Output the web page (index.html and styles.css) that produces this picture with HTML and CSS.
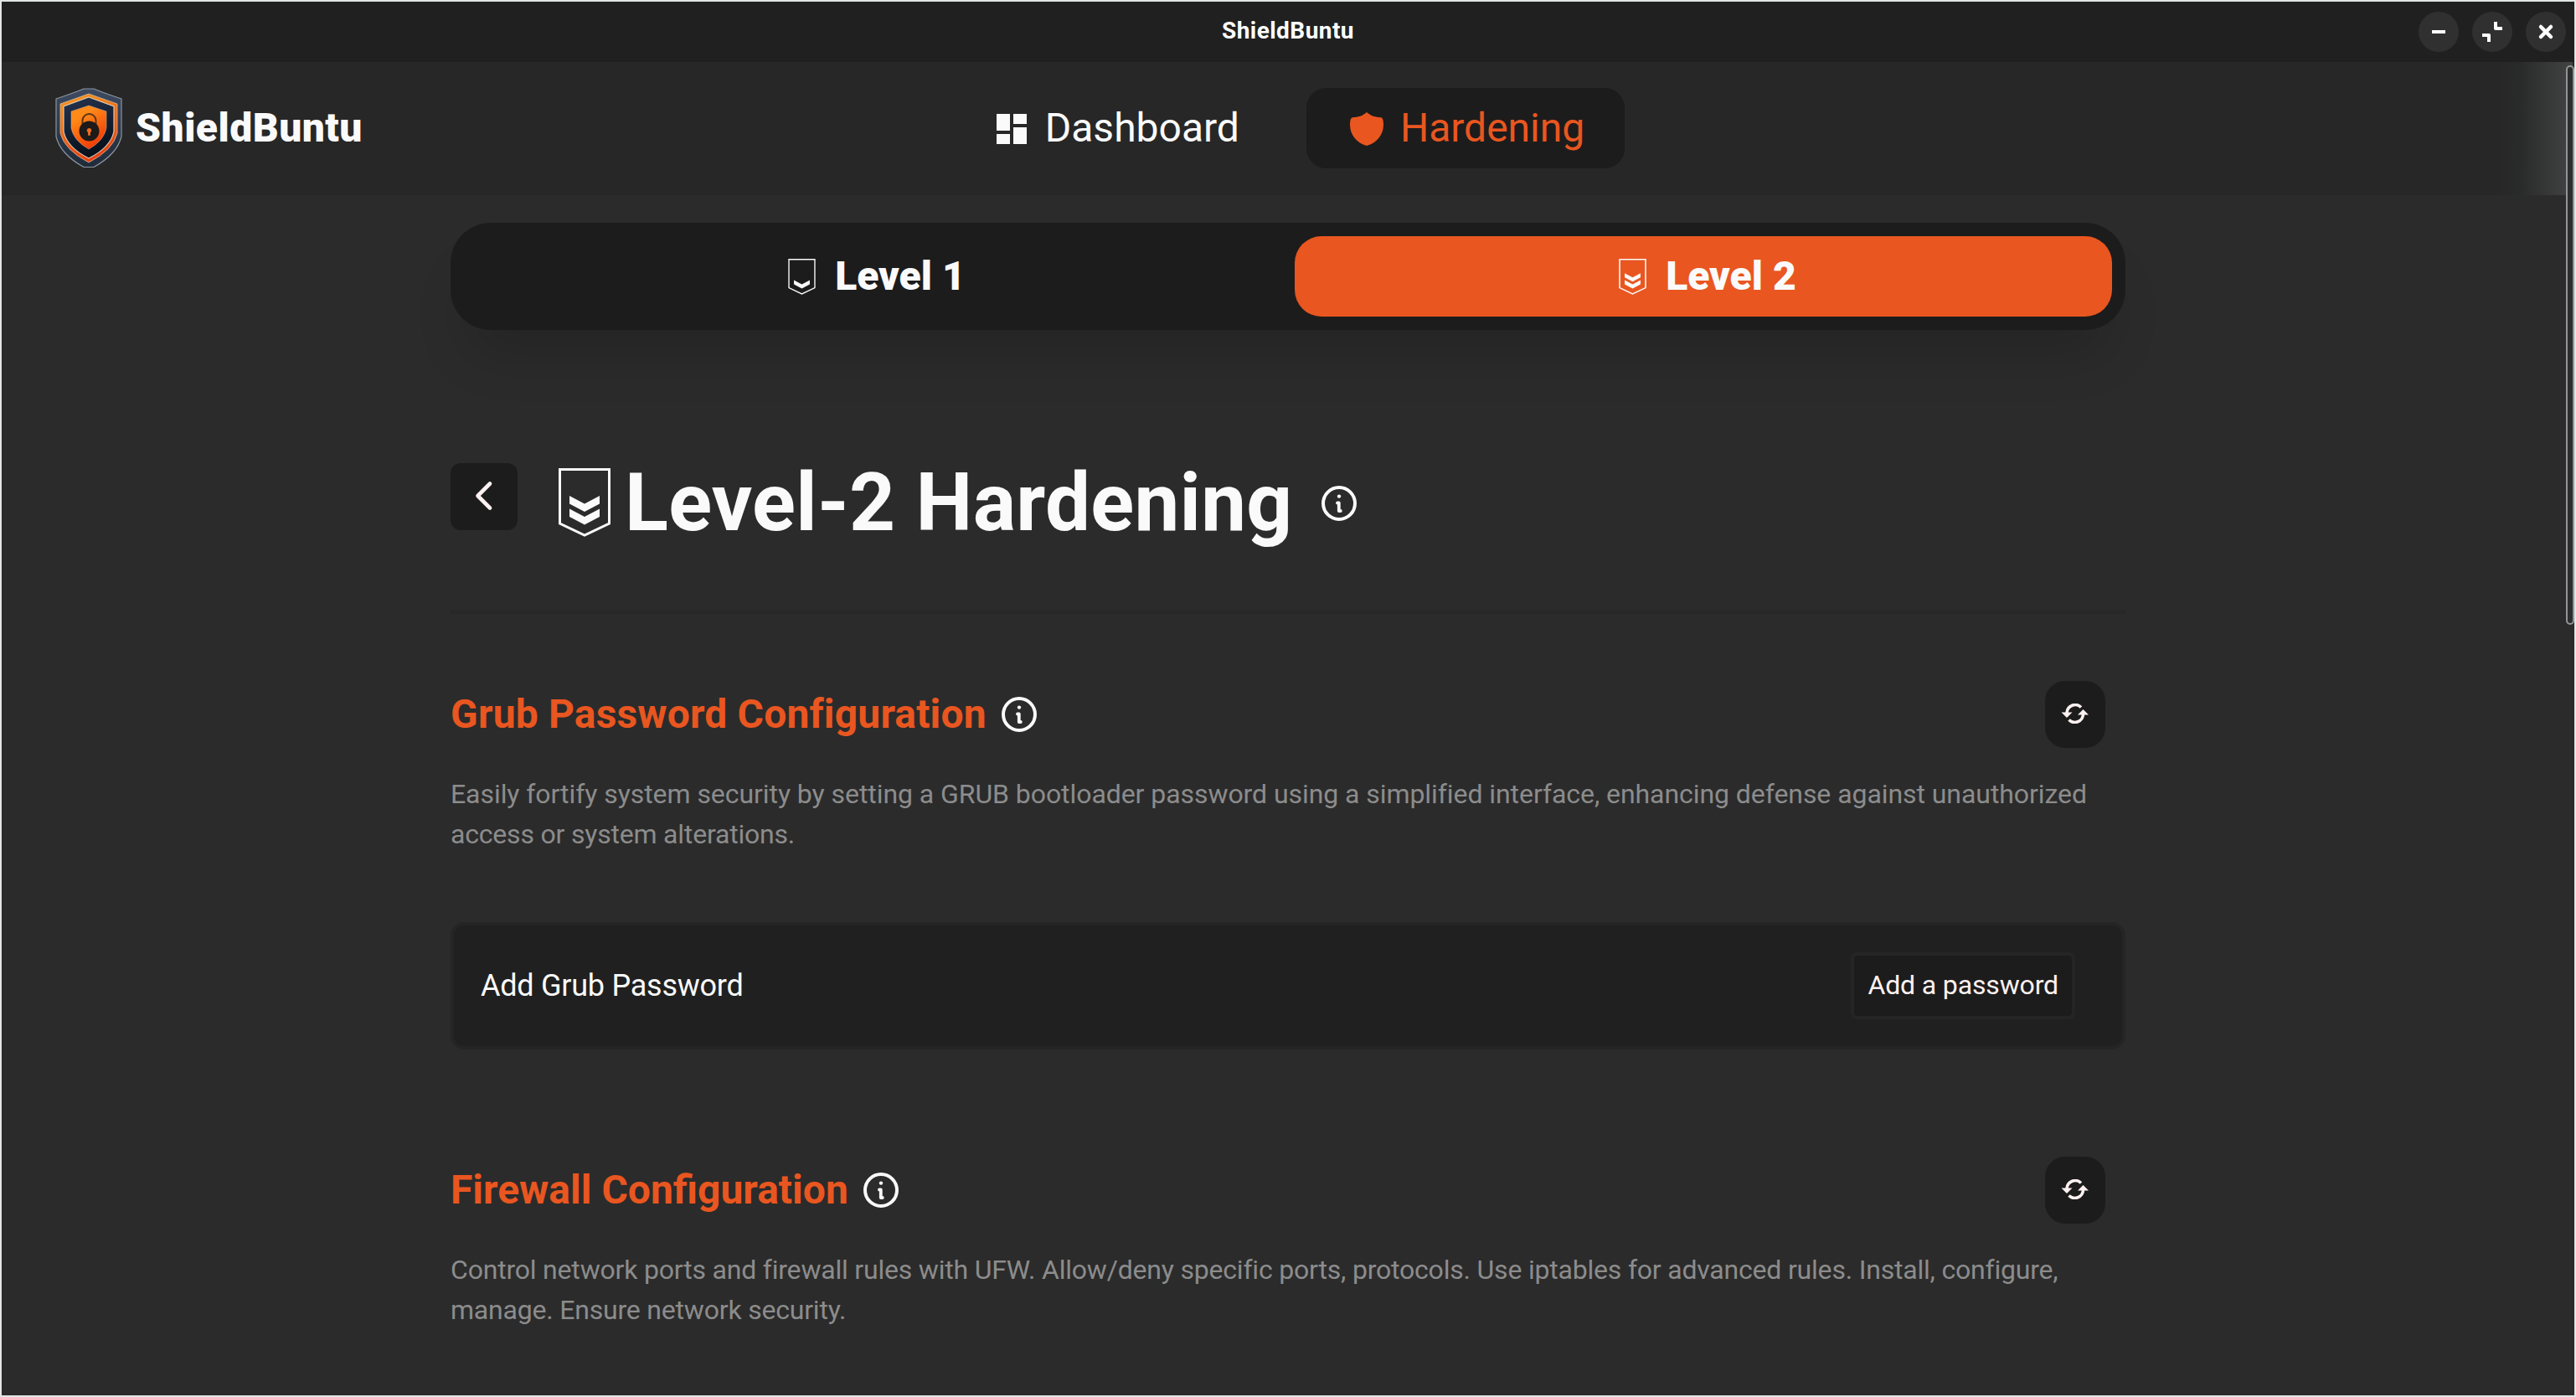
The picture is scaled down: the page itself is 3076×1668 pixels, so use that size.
FILE: index.html
```html
<!DOCTYPE html>
<html lang="en">
<head>
<meta charset="utf-8">
<title>ShieldBuntu</title>
<link rel="stylesheet" href="styles.css">
</head>
<body>
<svg class="sprite" aria-hidden="true">
  <symbol id="info" viewBox="0 0 42 42">
    <circle cx="21" cy="21" r="19" fill="none" stroke="currentColor" stroke-width="4"/>
    <circle cx="21" cy="12.600" r="2.200" fill="currentColor"/>
    <path d="M19 20.500h1.800v9.500h2" fill="none" stroke="currentColor" stroke-width="3.800" stroke-linecap="round" stroke-linejoin="round"/>
  </symbol>
  <symbol id="refresh" viewBox="0 0 34 24">
    <path d="M24 4.500A10 10 0 0 0 7 11" fill="none" stroke="currentColor" stroke-width="3.600"/>
    <path d="M0.500 10.500h13L7 17z" fill="currentColor"/>
    <path d="M9.500 19.500A10 10 0 0 0 26.500 13" fill="none" stroke="currentColor" stroke-width="3.600"/>
    <path d="M20 13.500h13L26.500 7z" fill="currentColor"/>
  </symbol>
  <symbol id="level1" viewBox="0 0 62 82">
    <path d="M1.500 1.500h59v64.500L31 80 1.500 66z" fill="none" stroke="currentColor" stroke-width="2.600"/>
    <path d="M13 48.500l18 9.500 18-9.500v9.500L31 67.500 13 58z" fill="currentColor"/>
  </symbol>
  <symbol id="level2" viewBox="0 0 62 82">
    <path d="M1.500 1.500h59v64.500L31 80 1.500 66z" fill="none" stroke="currentColor" stroke-width="3"/>
    <path d="M13 33l18 9.500L49 33v9.500L31 52 13 42.500zM13 48.500l18 9.500 18-9.500v9.500L31 67.500 13 58z" fill="currentColor"/>
  </symbol>
</svg>
<div class="window">
  <header class="titlebar">
    <span class="titlebar-title">ShieldBuntu</span>
    <div class="controls">
      <span class="control"><svg width="48" height="48"><path d="M16 24h16" stroke="#fff" stroke-width="4"/></svg></span>
      <span class="control"><svg width="48" height="48"><path d="M28 12v8h8M12 28h8v8" fill="none" stroke="#fff" stroke-width="4" stroke-linejoin="round"/></svg></span>
      <span class="control"><svg width="48" height="48"><path d="M18 18l12 12M30 18L18 30" stroke="#fff" stroke-width="4.500" stroke-linecap="round"/></svg></span>
    </div>
  </header>
  <nav class="nav">
    <div class="brand">
      <svg class="logo" viewBox="0 0 80 96">
        <defs>
          <linearGradient id="rim" x1="0" y1="0" x2="0" y2="1"><stop offset="0" stop-color="#3d4a61"/><stop offset="1" stop-color="#1f2b3a"/></linearGradient>
          <linearGradient id="band" x1="0" y1="0" x2="0.300" y2="1"><stop offset="0" stop-color="#f59a1c"/><stop offset="1" stop-color="#e8400f"/></linearGradient>
          <linearGradient id="navy" x1="0" y1="0" x2="0.300" y2="1"><stop offset="0" stop-color="#26344f"/><stop offset="1" stop-color="#07111c"/></linearGradient>
          <linearGradient id="core" x1="0" y1="0" x2="0.500" y2="1"><stop offset="0.300" stop-color="#ff8a18"/><stop offset="1" stop-color="#f03c06"/></linearGradient>
        </defs>
        <path d="M34 1h12Q58 6 79 13V58Q74 79 46 94.500H34Q6 79 1 58V13Q22 6 34 1z" fill="url(#rim)" stroke="#8d949d" stroke-width="1.200"/>
        <path d="M40 7L74 19V54Q69 74 40 89Q11 74 6 54V19z" fill="url(#band)" stroke="#d2b9a6" stroke-width="0.800"/>
        <path d="M40 11L70 22V52Q66 71 40 84Q14 71 10 52V22z" fill="url(#navy)" stroke="#d9c8b8" stroke-width="1.200"/>
        <path d="M40 21L61 28V48Q58 63 40 73Q22 63 19 48V28z" fill="url(#core)" stroke="#c9a184" stroke-width="0.600"/>
        <path d="M32.500 44V39a8 8 0 0 1 16 0v5" fill="none" stroke="#5b3517" stroke-width="2"/>
        <circle cx="40.500" cy="51.500" r="12" fill="#1d1a19"/>
        <path d="M40.500 48a2.800 2.800 0 0 1 1.400 5.200v3.500h-2.800v-3.500A2.800 2.800 0 0 1 40.500 48z" fill="#f36b1c"/>
      </svg>
      <span class="brand-name">ShieldBuntu</span>
    </div>
    <div class="links">
      <a class="link"><svg class="link-icon" viewBox="0 0 24 24"><path d="M3 13h8V3H3v10zm0 8h8v-6H3v6zm10 0h8V11h-8v10zm0-18v6h8V3h-8z"/></svg>Dashboard</a>
      <a class="link link-active"><svg class="link-icon" viewBox="0 0 48 48"><path d="M24 4c-5 4.500-10.500 6-17 6.200C5 10.400 4 14 4 19c0 12 8 21.800 20 25 12-3.200 20-13 20-25 0-5-1-8.600-3-8.800C34.500 10 29 8.500 24 4z"/></svg>Hardening</a>
    </div>
    <div class="nav-glow"></div>
  </nav>
  <main class="content">
    <div class="tabs">
      <div class="tab"><svg class="tab-icon"><use href="#level1"/></svg>Level 1</div>
      <div class="tab tab-active"><svg class="tab-icon"><use href="#level2"/></svg>Level 2</div>
    </div>
    <div class="page-head">
      <button class="back"><svg width="80" height="80"><path d="M47 24.500L32.500 39 47 53.500" fill="none" stroke="currentColor" stroke-width="4.600" stroke-linecap="round" stroke-linejoin="round"/></svg></button>
      <svg class="page-icon"><use href="#level2"/></svg>
      <h1 class="page-title">Level-2 Hardening</h1>
      <svg class="info page-info"><use href="#info"/></svg>
    </div>
    <section class="section section-grub">
      <div class="section-head">
        <h2 class="section-title">Grub Password Configuration</h2>
        <svg class="info"><use href="#info"/></svg>
        <button class="refresh"><svg width="34" height="24"><use href="#refresh"/></svg></button>
      </div>
      <p class="desc"><span class="desc-lead">Easily fortify system security by setting a GRUB bootloader password using a simplified interface, enhancing defense against unauthorized</span> access or system alterations.</p>
      <div class="card">
        <span class="card-label">Add Grub Password</span>
        <button class="action">Add a password</button>
      </div>
    </section>
    <section class="section section-firewall">
      <div class="section-head">
        <h2 class="section-title">Firewall Configuration</h2>
        <svg class="info"><use href="#info"/></svg>
        <button class="refresh"><svg width="34" height="24"><use href="#refresh"/></svg></button>
      </div>
      <p class="desc">Control network ports and firewall rules with UFW. Allow/deny specific ports, protocols. Use iptables for advanced rules. Install, configure,<br>manage. Ensure network security.</p>
    </section>
  </main>
  <div class="scrollbar"></div>
</div>
</body>
</html>
```
FILE: styles.css
```css
* { box-sizing: border-box; }
body { margin: 0; background: #2b2b2b; font-family: Roboto, sans-serif; color: #fafafa; }
button { font: inherit; color: #fff1f1; border: 0; padding: 0; }
svg { display: block; flex: none; }
.sprite { position: absolute; width: 0; height: 0; }
.window { position: relative; width: 3076px; height: 1668px; border: 2px solid #e3e6e6; overflow: hidden; }

.titlebar { display: grid; grid-template-columns: 1fr auto 1fr; align-items: center; height: 72px; background: #202020; }
.titlebar-title { grid-column: 2; padding-bottom: 3px; font-size: 28px; font-weight: 700; letter-spacing: 0.45px; color: #fff; }
.controls { display: flex; justify-content: flex-end; gap: 16px; padding-right: 10px; }
.control { width: 48px; height: 48px; border-radius: 50%; background: #303030; }

.nav { position: relative; display: grid; grid-template-columns: 1fr auto 1fr; align-items: center; height: 159px; background: #272727; padding: 0 64px 1px; }
.brand { display: flex; align-items: center; gap: 16px; }
.logo { width: 80px; height: 96px; }
.brand-name { padding-bottom: 1px; font-size: 48px; font-weight: 900; letter-spacing: 0.5px; }
.links { display: flex; gap: 32px; }
.link { display: flex; align-items: center; gap: 16px; height: 96px; padding: 0 48px 1px; border-radius: 24px; font-size: 48px; }
.link-icon { width: 48px; height: 48px; margin-top: 2px; fill: currentColor; }
.link-active { background: #1c1c1c; color: #e95620; }
.nav-glow { position: absolute; right: 2px; top: 0; width: 90px; height: 100%; background: linear-gradient(to right, #27272700, #292a2a 30%, #434343); }

.content { width: 2000px; margin: 33px auto 0; }
.tabs { display: grid; grid-template-columns: 1fr 1fr; gap: 16px; height: 128px; padding: 16px; border-radius: 48px; background: #1c1c1c; box-shadow: 0 46px 66px -24px rgba(0,0,0,.18); }
.tab { display: flex; align-items: center; justify-content: center; gap: 23px; padding: 0 0 2px 10px; border-radius: 32px; font-size: 48px; font-weight: 900; }
.tab-active { background: #e95620; }
.tab-icon { width: 33px; height: 43px; margin-top: 2px; }

.page-head { display: flex; align-items: center; height: 112px; margin-top: 151px; }
.back { width: 80px; height: 80px; margin: 0 49px 16px 0; border-radius: 12px; background: #1c1c1c; }
.page-icon { width: 62px; height: 82px; margin: 0 17px 3px 0; }
.page-title { margin: 0; padding-bottom: 2px; font-size: 96px; font-weight: 700; line-height: 112px; letter-spacing: 0.3px; }
.info { width: 42px; height: 42px; }
.page-info { margin-left: 35px; }

.section { padding-top: 80px; }
.section-grub { margin-top: 72px; border-top: 4px solid #272727; }
.section-head { display: flex; align-items: center; height: 80px; padding-right: 24px; gap: 18px; }
.section-title { margin: 0; padding-bottom: 2px; font-size: 48px; font-weight: 700; color: #e95620; }
.section-grub .section-title { letter-spacing: 0.17px; }
.refresh { display: flex; align-items: center; justify-content: center; width: 72px; height: 80px; margin-left: auto; padding-bottom: 2px; border-radius: 24px; background: #1c1c1c; }
.desc { margin: 31px 0 0; font-size: 32px; line-height: 48px; letter-spacing: -0.2px; color: #8c8c8c; }
.desc-lead { letter-spacing: -0.065px; }
.card { display: flex; align-items: center; justify-content: space-between; height: 152px; margin: 81px 0 48px; padding: 0 56px 0 32px; border: 4px solid #252525; border-radius: 16px; background: #202020; }
.card-label { padding-bottom: 1px; font-size: 36px; letter-spacing: -0.25px; }
.action { height: 80px; padding: 0 16px 2px; border: 4px solid #252525; border-radius: 8px; background: #1c1c1c; font-size: 32px; letter-spacing: -0.14px; }

.scrollbar { position: absolute; right: 0; top: 76px; width: 10px; height: 668px; border: 2px solid #949494; border-radius: 5px; background: #2a2e2f; }
```
